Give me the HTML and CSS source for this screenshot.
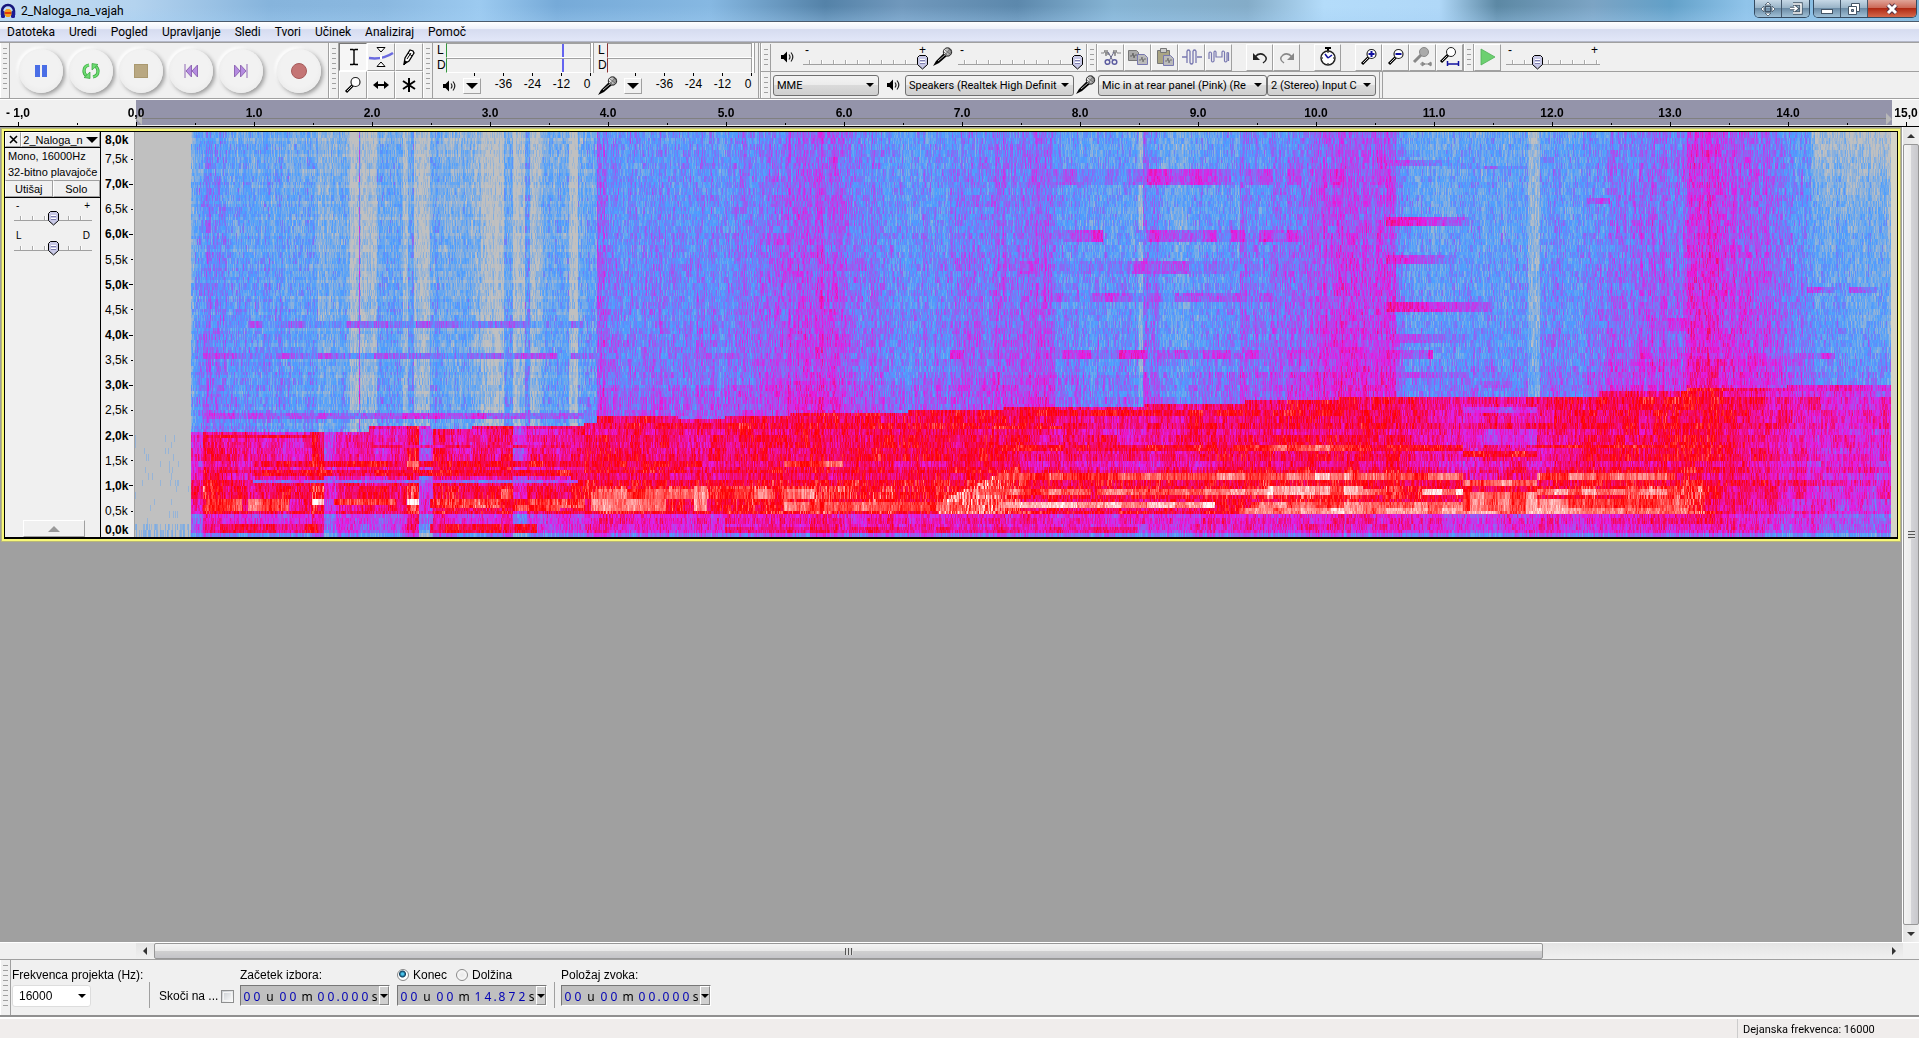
FILE: index.html
```html
<!DOCTYPE html>
<html lang="sl">
<head>
<meta charset="utf-8">
<title>2_Naloga_na_vajah</title>
<link rel="stylesheet" href="styles.css">
</head>
<body>
<svg class="defs" aria-hidden="true">
  <defs>
    <linearGradient id="mic-head"><stop offset="0" stop-color="#fff"/><stop offset="1" stop-color="#777"/></linearGradient>
    <symbol id="speaker" viewBox="0 0 14 14"><path d="M0 5h2.500L6 1.500v11L2.500 9H0z" fill="#000"/><path d="M8 4.500q2 2.500 0 5M10 2.500q3.600 4.500 0 9" fill="none" stroke="#222" stroke-width="1.200"/></symbol>
    <symbol id="mic" viewBox="0 0 20 20"><path d="M0 19l3-5 8-8 3 3-8 7-4 2z" fill="#000"/><path d="M5 14l7-6" stroke="#bbb"/><circle cx="14.500" cy="5" r="4.200" fill="url(#mic-head)" stroke="#222"/><path d="M12 3l5 4M11 5l4 4M15 1l4 4M17 2l-5 6" stroke="#555" stroke-width=".7"/></symbol>
    <symbol id="lens" viewBox="0 0 20 20"><path d="M3 17l7-7" stroke="#000" stroke-width="3"/><path d="M4 16l5-5" stroke="#ccc"/><circle cx="12.500" cy="7" r="4.500" fill="#fff" stroke="#222" stroke-width="1.200"/></symbol>
  </defs>
</svg>

<header class="titlebar">
  <svg class="app-icon" viewBox="0 0 16 16"><path d="M2 12V8a6 6 0 0 1 12 0v4" fill="none" stroke="#16167c" stroke-width="2.500"/><rect x="1" y="8" width="4" height="7" rx="1.500" fill="#1c1c96"/><rect x="11" y="8" width="4" height="7" rx="1.500" fill="#1c1c96"/><path d="M4.500 12V8l2-2h3l2 2v4l-2 2h-3z" fill="#f6a11a"/><path d="M5 10h6" stroke="#e43a0c" stroke-width="2"/></svg>
  <h1>2_Naloga_na_vajah</h1>
  <div class="caption-group">
    <button aria-label="Premakni"><svg width="16" height="16" viewBox="0 0 16 16"><path d="M8 1l3 3H5zM8 15l3-3H5zM1 8l3-3v6zM15 8l-3-3v6z" fill="#fff" stroke="#456" stroke-width=".8"/><rect x="5.500" y="5.500" width="5" height="5" fill="none" stroke="#456"/></svg></button>
    <button aria-label="Na drugi zaslon"><svg width="14" height="14" viewBox="0 0 14 14"><path d="M4 2h8v9H4M1 6.500h6M5 4l3 2.500L5 9" fill="none" stroke="#456" stroke-width="3.400"/><path d="M4 2h8v9H4M1 6.500h6M5 4l3 2.500L5 9" fill="none" stroke="#fff" stroke-width="1.600"/></svg></button>
  </div>
  <div class="caption-group">
    <button aria-label="Pomanjšaj"><svg width="14" height="14" viewBox="0 0 14 14"><rect x="1.500" y="7.500" width="11" height="4" fill="#fff" stroke="#456"/></svg></button>
    <button aria-label="Obnovi"><svg width="14" height="14" viewBox="0 0 14 14"><path d="M4.500 1.500h8v8h-8z" fill="#fff" stroke="#456"/><path d="M1.500 4.500h8v8h-8z" fill="#fff" stroke="#456"/><path d="M4.500 7.500h2v2h-2z" fill="#89a" stroke="#456"/></svg></button>
    <button class="close" aria-label="Zapri"><svg width="14" height="14" viewBox="0 0 14 14"><path d="M3 3l8 8M11 3l-8 8" stroke="#534" stroke-width="5"/><path d="M3 3l8 8M11 3l-8 8" stroke="#fff" stroke-width="3"/></svg></button>
  </div>
</header>

<nav class="menubar">
  <a href="#">Datoteka</a><a href="#">Uredi</a><a href="#">Pogled</a><a href="#">Upravljanje</a><a href="#">Sledi</a><a href="#">Tvori</a><a href="#">Učinek</a><a href="#">Analiziraj</a><a href="#">Pomoč</a>
</nav>

<div class="toolbars">
  <section class="bar transport">
    <i class="grip"></i>
    <button aria-label="Premor"><svg width="16" height="16"><path d="M2 2h5v12H2zM9 2h5v12H9z" fill="#4a6ee6"/></svg></button>
    <button aria-label="Predvajaj v zanki"><svg width="18" height="18" viewBox="0 0 18 18"><path d="M7 3q-5 1-5 6 0 3 2.500 4.800M11 15q5-1 5-6 0-3-2.500-4.800" fill="none" stroke="#35a23a" stroke-width="3.200"/><path d="M7 3q-5 1-5 6 0 3 2.500 4.800M11 15q5-1 5-6 0-3-2.500-4.800" fill="none" stroke="#6ddb72" stroke-width="1.800"/><path d="M2 15.500l6 1V10zM16 2.500l-6-1V8z" fill="#6ddb72" stroke="#35a23a" stroke-width=".7"/></svg></button>
    <button aria-label="Ustavi"><svg width="14" height="14"><rect x=".5" y=".5" width="13" height="13" fill="#b9a882" stroke="#aa9970"/></svg></button>
    <button aria-label="Na začetek"><svg width="16" height="16" viewBox="0 0 16 16"><path d="M2 1v14M8.500 2v12L3 8zM14.500 2v12L9 8z" fill="#b48be0" stroke="#9068b4"/></svg></button>
    <button aria-label="Na konec"><svg width="16" height="16" viewBox="0 0 16 16"><path d="M14 1v14M7.500 2v12L13 8zM1.500 2v12L7 8z" fill="#b48be0" stroke="#9068b4"/></svg></button>
    <button class="record" aria-label="Snemaj"><svg width="18" height="18"><circle cx="9" cy="9" r="7.500" fill="#c47575" stroke="#a65b5b"/></svg></button>
  </section>

  <section class="bar tools">
    <i class="grip"></i>
    <div class="tool-grid">
      <button class="on" aria-label="Izbor"><svg width="20" height="20"><path d="M7 2.500h3l1 1 1-1h3M11 3v14M7 17.500h3l1-1 1 1h3" fill="none" stroke="#000" stroke-width="1.400"/></svg></button>
      <button aria-label="Ovojnica"><svg width="24" height="20" viewBox="0 0 24 20"><path d="M8 .5h8L12 5zM8 19.500h8L12 15z" fill="#fff" stroke="#000"/><path d="M0 11q13 2 24-5" fill="none" stroke="#6a6ae0" stroke-width="2.500"/><path d="M12 8v4" stroke="#fff" stroke-width="2"/></svg></button>
      <button aria-label="Risanje"><svg width="20" height="20"><path d="M5 17l1-6 5-8 3 1 1 2-5 8z" fill="#fff" stroke="#000" stroke-width="1.300"/><path d="M5 18l1-4 2 1zM9 6l4 3M8 12l4-6" stroke="#000"/></svg></button>
      <button aria-label="Povečava"><svg width="20" height="20"><use href="#lens"/></svg></button>
      <button aria-label="Časovni zamik"><svg width="20" height="20"><path d="M4 10h12" stroke="#000" stroke-width="2"/><path d="M2 10l5-4v8zM18 10l-5-4v8z"/></svg></button>
      <button aria-label="Več orodij"><svg width="20" height="20"><path d="M10 3v14M4 6l12 8M16 6L4 14" stroke="#000" stroke-width="2"/></svg></button>
    </div>
  </section>

  <section class="bar meters">
    <i class="grip"></i>
    <div class="meter">
      <div class="channel"><b>L</b><span class="level"><i class="peak"></i></span></div>
      <div class="channel"><b>D</b><span class="level"><i class="peak"></i></span></div>
      <div class="meter-ticks"></div>
      <div class="meter-foot"><svg width="14" height="14"><use href="#speaker"/></svg><button class="drop" aria-label="Merilnik predvajanja"></button><span>-36</span><span>-24</span><span>-12</span><span class="zero">0</span></div>
    </div>
    <div class="meter input">
      <div class="channel"><b>L</b><span class="level"></span></div>
      <div class="channel"><b>D</b><span class="level"></span></div>
      <div class="meter-ticks"></div>
      <div class="meter-foot"><svg width="20" height="20"><use href="#mic"/></svg><button class="drop" aria-label="Merilnik snemanja"></button><span>-36</span><span>-24</span><span>-12</span><span class="zero">0</span></div>
    </div>
  </section>

  <div class="stack">
    <div class="stack-row">
      <section class="bar mixer">
        <i class="grip"></i>
        <svg class="spk" width="14" height="14"><use href="#speaker"/></svg>
        <label class="slider wide"><span><em>-</em><em>+</em></span><input type="range" value="100" aria-label="Glasnost predvajanja"></label>
        <svg width="20" height="20"><use href="#mic"/></svg>
        <label class="slider wide"><span><em>-</em><em>+</em></span><input type="range" value="100" aria-label="Glasnost snemanja"></label>
      </section>
      <section class="bar edit">
        <i class="grip"></i>
        <button aria-label="Obreži"><svg width="20" height="20"><path d="M0 6h3l1-3 1 6 1-6 1 5 1-2M12 6l1-3 1 6 1-6 1 3h4" fill="none" stroke="#888" /><path d="M7 5l5 9M13 5l-5 9" stroke="#668"/><circle cx="6.500" cy="15" r="2.300" fill="none" stroke="#5c5ca0" stroke-width="1.500"/><circle cx="13.500" cy="15" r="2.300" fill="none" stroke="#5c5ca0" stroke-width="1.500"/></svg></button>
        <button aria-label="Kopiraj"><svg width="20" height="20"><path d="M.5 3.500h8l2 2v8H.5z" fill="#aaa" stroke="#777"/><path d="M2 9h2l1-3 1 5 1-3h2" fill="none" stroke="#666"/><path d="M9.500 7.500h7l3 3v7h-10z" fill="#bbb" stroke="#7878b0"/><path d="M11 13h2l1-3 1 5 1-3h2" fill="none" stroke="#777"/></svg></button>
        <button aria-label="Prilepi"><svg width="20" height="20"><path d="M2.500 3.500h12v13h-12z" fill="#aaa584" stroke="#777"/><path d="M5.500 1.500h6v4h-6z" fill="#ccc" stroke="#777"/><path d="M8.500 8.500h7l3 3v7h-10z" fill="#bbb" stroke="#7878b0"/><path d="M10 14h2l1-3 1 5 1-3h2" fill="none" stroke="#777"/></svg></button>
        <button aria-label="Prireži"><svg width="20" height="20"><path d="M0 10h5M15 10h5M5 4v12M8 4v12M11 4v12M14 4v12M5 4q1.500-2 3 0M8 16q1.500 2 3 0M11 4q1.500-2 3 0" fill="none" stroke="#7878b0" stroke-width="1.300"/></svg></button>
        <button aria-label="Utišaj zvok"><svg width="20" height="20"><path d="M0 12V6q1-2 2.500 0v8q1 2 2.500 0V5q1-2 2 0v5h6V5q1-2 2.500 0v9q1 2 2.500 0V6q1-1 1.500 0v8" fill="none" stroke="#7878b0" stroke-width="1.200"/></svg></button>
        <button class="gap" aria-label="Razveljavi"><svg width="20" height="20"><path d="M5 10q4-5 9-2 5 4-1 8" fill="none" stroke="#222" stroke-width="1.500"/><path d="M3 6v7h7z" fill="#222"/></svg></button>
        <button aria-label="Uveljavi"><svg width="20" height="20"><path d="M15 10q-4-5-9-2-5 4 1 8" fill="none" stroke="#888" stroke-width="1.500"/><path d="M17 6v7h-7z" fill="#888"/></svg></button>
        <button class="gap" aria-label="Zakleni sledi"><svg width="20" height="20"><path d="M7 1h6M10 1v3" stroke="#000" stroke-width="2"/><circle cx="10" cy="11" r="7" fill="#fff" stroke="#222" stroke-width="1.500"/><path d="M10 11L7 7M10 11l4-3" stroke="#1010a0" stroke-width="1.500"/><path d="M10 5v1M10 16v1M4 11h1M15 11h1" stroke="#000"/></svg></button>
        <button class="gap" aria-label="Povečaj"><svg width="20" height="20"><use href="#lens"/><path d="M9.500 7h6M12.500 4v6" stroke="#1010a0" stroke-width="2"/></svg></button>
        <button aria-label="Pomanjšaj pogled"><svg width="20" height="20"><use href="#lens"/><path d="M9.500 7h6" stroke="#1010a0" stroke-width="2"/></svg></button>
        <button aria-label="Prilagodi izbor"><svg width="20" height="20"><path d="M1 15l7-7" stroke="#888" stroke-width="3"/><circle cx="11" cy="5" r="4.500" fill="#aaa" stroke="#888"/><path d="M7 17h12M12 17l-3-2v4zM15 17l3-2v4z" stroke="#888" fill="#888"/></svg></button>
        <button aria-label="Prilagodi projekt"><svg width="20" height="20"><path d="M1 15l7-7" stroke="#000" stroke-width="3"/><path d="M2 14l5-5" stroke="#ccc"/><circle cx="11" cy="5" r="4.500" fill="#fff" stroke="#222"/><path d="M7.500 14v5M18.500 14v5M7 17h12" stroke="#1010a0" stroke-width="1.500"/></svg></button>
      </section>
      <section class="bar speed">
        <i class="grip"></i>
        <button aria-label="Predvajaj s hitrostjo"><svg width="20" height="20"><path d="M3 2l14 8-14 8z" fill="#6cd070" stroke="#50b058" stroke-width=".8"/></svg></button>
        <label class="slider mid"><span><em>-</em><em>+</em></span><input type="range" value="31" aria-label="Hitrost predvajanja"></label>
      </section>
    </div>
    <div class="stack-row devices">
      <i class="grip"></i>
      <select class="host" aria-label="Gostitelj"><option>MME</option></select>
      <svg class="spk-device" width="14" height="14"><use href="#speaker"/></svg>
      <select class="device" aria-label="Izhodna naprava"><option>Speakers (Realtek High Definit</option></select>
      <svg class="micro" width="20" height="20"><use href="#mic"/></svg>
      <select class="device" aria-label="Vhodna naprava"><option>Mic in at rear panel (Pink) (Re</option></select>
      <select class="channels" aria-label="Vhodni kanali"><option>2 (Stereo) Input C</option></select>
      <i class="bar-end"></i>
    </div>
  </div>
</div>

<div class="timeline">
  <div class="selected"></div>
  <ol><li>- 1,0</li><li>0,0</li><li>1.0</li><li>2.0</li><li>3.0</li><li>4.0</li><li>5.0</li><li>6.0</li><li>7.0</li><li>8.0</li><li>9.0</li><li>10.0</li><li>11.0</li><li>12.0</li><li>13.0</li><li>14.0</li><li>15,0</li></ol>
</div>

<main class="workspace">
  <div class="track-area">
    <article class="track">
      <aside class="panel">
        <div class="panel-title"><button class="x" aria-label="Zapri sled"><svg width="9" height="9"><path d="M1 1l7 7M8 1L1 8" stroke="#000" stroke-width="1.600"/></svg></button><button class="name">2_Naloga_n<i class="arrow"></i></button></div>
        <p>Mono, 16000Hz</p>
        <p>32-bitno plavajoče</p>
        <div class="mute-solo"><button>Utišaj</button><button>Solo</button></div>
        <label class="slider small"><span><em>-</em><em>+</em></span><input type="range" aria-label="Ojačitev"></label>
        <label class="slider small"><span><em>L</em><em>D</em></span><input type="range" aria-label="Panorama"></label>
        <button class="collapse" aria-label="Strni"><svg width="12" height="6"><path d="M6 0l6 6H0z" fill="#999"/></svg></button>
      </aside>
      <ol class="freq"><li>8,0k</li><li>7,5k</li><li>7,0k</li><li>6,5k</li><li>6,0k</li><li>5,5k</li><li>5,0k</li><li>4,5k</li><li>4,0k</li><li>3,5k</li><li>3,0k</li><li>2,5k</li><li>2,0k</li><li>1,5k</li><li>1,0k</li><li>0,5k</li><li>0,0k</li></ol>
      <div class="spectrum"><canvas id="spectrogram" role="img" aria-label="Spektrogram"></canvas></div>
    </article>
  </div>
  <div class="vscroll"><button class="up" aria-label="Gor"></button><div class="thumb"><i></i></div><button class="down" aria-label="Dol"></button></div>
</main>

<div class="hscroll-row">
  <div class="hscroll"><button class="left" aria-label="Levo"></button><div class="thumb"><i></i></div><div class="rest"></div><button class="right" aria-label="Desno"></button></div>
</div>

<form class="selection">
  <i class="grip"></i>
  <div class="field rate"><label for="rate">Frekvenca projekta (Hz):</label><select id="rate"><option>16000</option></select></div>
  <i class="rule"></i>
  <label class="snap">Skoči na ...<input type="checkbox"></label>
  <div class="field"><span>Začetek izbora:</span><div class="time"><b>0</b><b>0</b><i class="u">u</i><b>0</b><b>0</b><i class="m">m</i><b>0</b><b>0</b><b class="dot">.</b><b>0</b><b>0</b><b>0</b><i class="s">s</i><button type="button" aria-label="Oblika začetka"></button></div></div>
  <div class="field"><div class="radios"><label><input type="radio" name="end" checked>Konec</label><label><input type="radio" name="end">Dolžina</label></div><div class="time"><b>0</b><b>0</b><i class="u">u</i><b>0</b><b>0</b><i class="m">m</i><b>1</b><b>4</b><b class="dot">.</b><b>8</b><b>7</b><b>2</b><i class="s">s</i><button type="button" aria-label="Oblika konca"></button></div></div>
  <i class="rule"></i>
  <div class="field"><span>Položaj zvoka:</span><div class="time"><b>0</b><b>0</b><i class="u">u</i><b>0</b><b>0</b><i class="m">m</i><b>0</b><b>0</b><b class="dot">.</b><b>0</b><b>0</b><b>0</b><i class="s">s</i><button type="button" aria-label="Oblika položaja"></button></div></div>
</form>

<footer class="status"><span>Dejanska frekvenca: 16000</span></footer>
<script src="spectrogram.js"></script>
</body>
</html>
```
FILE: styles.css
```css
* { box-sizing: border-box; }
body { margin: 0; height: 100vh; display: flex; flex-direction: column; overflow: hidden; background: #f0f0f0; color: #000; font: 12px "Liberation Sans", Arial, sans-serif; }
button, input, select { margin: 0; padding: 0; font: inherit; color: inherit; border-radius: 0; }
button { display: flex; align-items: center; justify-content: center; border: 0; background: #f0f0f0; }
svg { flex: none; overflow: visible; }
p, h1, ol { margin: 0; padding: 0; list-style: none; }
i, em { font-style: normal; }
.defs { position: absolute; width: 0; height: 0; }

.titlebar { flex: none; height: 22px; display: flex; align-items: flex-start; gap: 3px; padding-right: 2px; border-bottom: 1px solid #4a5a6c;
  background: linear-gradient(#fff0 30%, #a4d0f455 100%), linear-gradient(90deg, #c4dcf2 0, #b4d3ef 7%, #86b4dc 14%, #8ab8e0 20%, #9ccaf0 25%, #76aad8 29%, #86b8e2 37%, #5482a8 43%, #7098bc 47%, #5c88ac 53%, #86b4d4 58%, #84acc8 65%, #b4dcfa 69%, #b0d8f8 75%, #5c88a4 78%, #7ca4c4 83%, #62a0c8 87%, #90c4ea 91%, #7cb4d8 100%); }
.app-icon { width: 16px; height: 16px; margin: 3px 0 0 0; }
.titlebar h1 { flex: 1; font: 12px/22px Roboto, sans-serif; padding-left: 2px; }
.caption-group { display: flex; height: 18px; border: 1px solid #344a60; border-top: 0; border-radius: 0 0 5px 5px; overflow: hidden; }
.caption-group button { width: 27px; height: 17px; border-right: 1px solid #44586c; background: linear-gradient(#c6d8e6, #9ab4c8 45%, #6c8ca6 50%, #a0c0d6); }
.caption-group button:last-child { border-right: 0; }
.caption-group .close { width: 48px; background: linear-gradient(#e0a498, #cc6a58 45%, #b02a14 50%, #d4684a); }

.menubar { flex: none; height: 20px; display: flex; gap: 14px; padding-left: 7px; border-bottom: 1px solid #b4b8c8; background: linear-gradient(#fff, #eef1fa 35%, #d6dcf0 40%, #e2e7f8); font: 12px/21px Roboto, sans-serif; }
.menubar a { color: #000; text-decoration: none; }

.toolbars { flex: none; height: 57px; display: flex; border-top: 1px solid #a0a0a0; border-bottom: 1px solid #a0a0a0; }
.bar { display: flex; align-items: center; border-right: 1px solid #a0a0a0; }
.grip { flex: none; align-self: stretch; width: 10px; border-right: 1px solid #a0a0a0; border-left: 1px solid #fff; background: repeating-linear-gradient(#a0a0a0 0 1px, #f0f0f0 1px 2px, #f0f0f0 2px 5px) content-box; padding: 5px 2px; }

.transport { width: 329px; }
.transport button { width: 44px; height: 44px; margin-left: 6px; border-radius: 50%; background: radial-gradient(circle at 50% 45%, #f2f2f2 55%, #e4e4e4 100%); box-shadow: 2px 2px 4px #999, -2px -2px 3px #fff; }
.transport .grip + button { margin-left: 9px; }
.transport .record { margin-left: 14px; }

.tools { width: 94px; }
.tool-grid { display: grid; grid-template: 28px 28px / 28px 28px 28px; align-self: stretch; }
.tool-grid button, .edit button, .speed button { border: 1px solid; border-color: #fff #a0a0a0 #a0a0a0 #fff; }
.tool-grid .on { border-color: #777 #fff #fff #777; background: #f6f6f6; }

.meters { width: 338px; align-items: stretch; border-right: 3px double #a0a0a0; }
.meter { width: 161px; padding-left: 4px; }
.channel { display: flex; height: 15px; line-height: 15px; }
.channel b { width: 9px; font-weight: normal; }
.level { width: 145px; border: 1px solid; border-color: #a0a0a0 #a0a0a0 #fff #32963c; box-shadow: 2px 0 #fff, 3px 0 #a0a0a0; }
.input .level { border-left-color: #8c3232; }
.peak { display: block; width: 2px; height: 13px; margin-left: 115px; background: #6464f0; }
.meter-ticks { height: 3px; margin-left: 37px; width: 119px; background: repeating-linear-gradient(90deg, #000 0 1px, #0000 1px 29px); }
.meter-foot { display: flex; align-items: center; height: 20px; padding-left: 6px; }
.input .meter-foot { padding-left: 0; }
.meter-foot svg { margin-right: 6px; }
.meter-foot span { flex: none; width: 29px; text-align: center; line-height: 16px; align-self: flex-start; }
.meter-foot .drop { flex: none; width: 18px; height: 16px; margin-right: 8px; border: 1px solid; border-color: #fff #a0a0a0 #a0a0a0 #fff; }
.meter-foot .zero { width: 22px; }
.drop::after, .arrow { content: ""; border: 6px solid #0000; border-top-color: #000; border-bottom: 0; }

.stack { flex: 1; min-width: 0; display: flex; flex-direction: column; }
.stack-row { display: flex; align-items: center; height: 28px; }
.stack-row + .stack-row { height: 27px; border-top: 1px solid #a0a0a0; }
.stack-row .bar { height: 27px; }
.mixer { width: 326px; }
.spk { margin: 0 2px 0 10px; }
.spk-device { margin: 0 4px 0 8px; }
.slider { display: flex; flex-direction: column; flex: none; height: 26px; line-height: 12px; }
.slider span { display: flex; justify-content: space-between; height: 10px; padding: 0 2px; }
.slider input { appearance: none; width: 100%; height: 16px; outline: 0; background: linear-gradient(#a0a0a0, #a0a0a0) 0 10px / 100% 1px no-repeat, repeating-linear-gradient(90deg, #aaa 0 1px, #fff 1px 2px, #0000 2px 12px) 6px 6px / 100% 4px no-repeat; }
.slider input::-webkit-slider-thumb { appearance: none; width: 11px; height: 15px; background: url("data:image/svg+xml,%3Csvg xmlns='http://www.w3.org/2000/svg' width='11' height='15'%3E%3Cpath d='M2.500 .5h6l2 2v7l-5 4.500-5-4.500v-7z' fill='%23c8c8e6' stroke='%23000'/%3E%3Cpath d='M3 4.500h5M3 7.500h5' stroke='%23fff'/%3E%3Cpath d='M3 5.500h5M3 8.500h5' stroke='%238080b0'/%3E%3C/svg%3E"); }
.wide { width: 125px; margin: 0 5px 0 6px; }
.mixer .slider:last-child { margin: 0 0 0 5px; }
.mid { width: 94px; margin-left: 5px; }
.small { width: 78px; margin: 2px auto 0 9px; height: 28px; }
.small span { font-size: 10px; line-height: 11px; }
.edit { width: 377px; }
.edit button, .speed button { width: 27px; height: 27px; }
.edit .gap { margin-left: 14px; }
.speed { border-right: 0; }

select { appearance: none; height: 21px; padding: 0 16px 0 3px; border: 1px solid #707070; border-radius: 3px; outline: 0; font: 11px Roboto, sans-serif; overflow: hidden; text-overflow: clip; background: url("data:image/svg+xml,%3Csvg xmlns='http://www.w3.org/2000/svg' width='8' height='4'%3E%3Cpath d='M0 0h8L4 4z'/%3E%3C/svg%3E") right 4px center no-repeat, linear-gradient(#f4f4f4, #ebebeb 50%, #dadada 50%, #cfcfcf); }
.devices select:first-of-type { margin-left: 2px; }
.host { width: 106px; }
.device { width: 169px; }
.channels { width: 109px; }
.micro { margin: 0 2px; }
.bar-end { align-self: stretch; width: 4px; margin-left: 3px; border: solid #a0a0a0; border-width: 0 1px; }

.timeline { flex: none; position: relative; height: 28px; border-top: 1px solid #fff; border-bottom: 1px solid #000; overflow: hidden; }
.selected { position: absolute; inset: 0 27px 1px 136px; background: linear-gradient(#808080, #808080) 0 18px / 100% 1px no-repeat, #9494aa; }
.selected::before, .selected::after { content: ""; position: absolute; top: 13px; border: 6px solid #0000; }
.selected::before { left: -6px; border-right-color: #b8b8b8; }
.selected::after { right: -6px; border-left-color: #b8b8b8; }
.timeline ol { position: relative; display: flex; margin-left: -41px; font-weight: bold; line-height: 27px; }
.timeline li { flex: none; width: 118px; height: 26px; text-align: center; background: linear-gradient(#000, #000) 59px 22px / 1px 4px no-repeat, linear-gradient(#000, #000) 0 23px / 1px 2px no-repeat; }

.workspace { flex: 1; min-height: 0; display: flex; background: #a0a0a0; }
.track-area { flex: 1; min-width: 0; padding: 2px 2px 0; }
.track { display: flex; height: 412px; border: 2px solid #f8f878; outline: 1px solid #b8b878; }
.panel { flex: none; width: 97px; display: flex; flex-direction: column; border: solid #000; border-width: 1px 1px 2px; background: #f0f0f0; font-size: 11px; }
.panel-title { display: flex; height: 16px; border-bottom: 1px solid #000; }
.panel button { border: 1px solid; border-color: #fff #a0a0a0 #a0a0a0 #fff; }
.panel-title .x { width: 16px; }
.panel-title .name { flex: 1; gap: 3px; }
.panel p { height: 16px; line-height: 16px; padding-left: 3px; white-space: nowrap; }
.mute-solo { display: grid; grid-template-columns: 1fr 1fr; height: 18px; border-bottom: 1px solid #000; }
.mute-solo button { border-top-color: #a0a0a0; }
.collapse { width: 62px; height: 17px; margin: auto 0 0 18px; }
.freq { flex: none; width: 34px; display: flex; flex-direction: column; border: solid #000; border-width: 1px 0 2px; background: #f0f0f0; box-shadow: inset -1px 0 #a0a0a0; }
.freq li { flex: 1; display: flex; align-items: center; justify-content: space-between; padding: 0 2px 1px 4px; line-height: 12px; }
.freq li:nth-child(odd) { font-weight: bold; }
.freq li::after { content: ""; width: 2px; height: 1px; background: #000; }
.freq li:nth-child(odd)::after { width: 4px; }
.freq li:first-child, .freq li:last-child { flex: 0 0 13px; }
.freq li:first-child::after, .freq li:last-child::after { display: none; }
.freq li:first-child { padding-top: 2px; }
.spectrum { flex: 1; min-width: 0; border: solid #000; border-width: 1px 1px 2px 0; background: #d4d4c8; padding-right: 6px; }
.spectrum canvas { display: block; width: 100%; height: 100%; }

.vscroll { flex: none; width: 17px; display: flex; flex-direction: column; border-left: 1px solid #fff; background: linear-gradient(90deg, #e4e4e4, #f0f0f0); }
.vscroll button { flex: none; height: 17px; background: none; }
.vscroll .thumb { flex: 1; display: flex; align-items: center; justify-content: center; border: 1px solid #979797; border-radius: 2px; background: linear-gradient(90deg, #f4f4f4, #ececec 50%, #d4d4d8 50%, #c8c8cc); }
.vscroll .thumb i { width: 7px; height: 8px; background: repeating-linear-gradient(#555 0 1px, #ddd 1px 3px); }
.up::after, .down::after, .left::after, .right::after { content: ""; border: 4px solid #0000; }
.up::after { border-bottom-color: #333; border-top: 0; }
.down::after { border-top-color: #333; border-bottom: 0; }
.left::after { border-right-color: #333; border-left: 0; }
.right::after { border-left-color: #333; border-right: 0; }
.hscroll-row { flex: none; height: 17px; padding: 0 16px 0 136px; border-top: 1px solid #fff; }
.hscroll { display: flex; height: 16px; background: linear-gradient(#e4e4e4, #f0f0f0); }
.hscroll button { width: 18px; background: none; }
.hscroll .thumb { flex: 1389; display: flex; align-items: center; justify-content: center; border: 1px solid #979797; border-radius: 2px; background: linear-gradient(#f4f4f4, #e8e8e8 50%, #d0d0d0 50%, #c4c4c8); }
.hscroll .thumb i { width: 8px; height: 7px; background: repeating-linear-gradient(90deg, #555 0 1px, #ddd 1px 3px); }
.hscroll .rest { flex: 342; }

.selection { flex: none; height: 58px; display: flex; border-top: 1px solid #a0a0a0; border-bottom: 2px solid #909090; }
.selection .grip { width: 11px; }
.field { display: flex; flex-direction: column; gap: 1px; padding-top: 6px; margin-right: 7px; line-height: 18px; }
.rate { width: 137px; margin: 0 0 0 1px; }
.rate select { width: 79px; height: 22px; border-color: #ddd; padding-left: 6px; font: 12px "Liberation Sans", Arial, sans-serif; background: url("data:image/svg+xml,%3Csvg xmlns='http://www.w3.org/2000/svg' width='8' height='4'%3E%3Cpath d='M0 0h8L4 4z'/%3E%3C/svg%3E") right 4px center no-repeat, #fff; }
.rule { flex: none; width: 1px; height: 26px; margin: 22px 9px 0 0; background: #a0a0a0; }
.selection .rule:nth-of-type(3) { margin-right: 6px; }
.snap { display: flex; align-items: center; justify-content: space-between; width: 75px; height: 22px; margin: 25px 6px 0 0; white-space: nowrap; }
.snap input { appearance: none; width: 13px; height: 13px; border: 1px solid #8e8f8f; background: linear-gradient(135deg, #c8ccd0, #fff); outline: 1px solid #f4f4f4; outline-offset: -3px; }
.radios { display: flex; gap: 9px; }
.radios label { display: flex; align-items: center; gap: 4px; height: 18px; }
.radios input { appearance: none; width: 12px; height: 12px; border: 1px solid #888; border-radius: 50%; background: radial-gradient(#e8e8e8, #fff); }
.radios input:checked { background: radial-gradient(circle at 45% 40%, #4cc8f0 0 1px, #0c3c5c 3px, #fff 4px); }
.time { display: flex; width: 150px; height: 21px; padding-left: 1px; border: 1px solid; border-color: #777 #fff #fff #777; background: #c0c0c0; font: 12px/21px "Noto Sans", sans-serif; text-align: center; }
.time b { width: 10px; font-weight: normal; color: #0000b4; }
.time .dot { width: 4px; }
.time .u { width: 16px; }
.time .m { width: 18px; }
.time .s { width: 9px; }
.time button { width: 10px; height: 19px; border: 1px solid; border-color: #fff #888 #888 #fff; background: #d0d0d0; }
.time button::after { content: ""; border: 4px solid #0000; border-top-color: #000; border-bottom: 0; }

.status { flex: none; height: 21px; display: flex; justify-content: flex-end; border-top: 2px solid #fff; background: #f0edec; font: 11px/21px Roboto, sans-serif; }
.status span { width: 182px; padding-left: 5px; border-left: 1px solid #ccc; }
```
FILE: spectrogram.js
```js
// Draws the spectrogram: time runs across (118 px per second), frequency up (0-8 kHz).
const PX_PER_SECOND = 118;
const BINS = 128;
const PALETTE = [[192, 192, 192], [75, 158, 255], [228, 28, 226], [255, 0, 0], [255, 255, 255]];

// Background energy above the speech band: [start s, energy].
const HIGH = [
  [0, 0], [.47, .18], [.53, .25], [.6, .35], [.69, .29], [.85, .25], [1.45, .22], [1.55, .11], [1.7, .18], [1.82, .05],
  [1.89, .38], [1.9, .06], [2.05, .2], [2.27, .05], [2.31, .25], [2.36, .06], [2.5, .22], [2.75, .16],
  [2.93, .04], [3.12, .24], [3.2, .06], [3.3, .28], [3.34, .1], [3.45, .2], [3.67, .04], [3.75, .22],
  [3.91, .4], [4.02, .31], [4.2, .28], [4.6, .29], [5.1, .31], [5.4, .34], [5.6, .4], [5.85, .41], [6, .37], [6.3, .3],
  [6.45, .27], [6.85, .31], [7.2, .34], [7.7, .38], [7.85, .31], [8.1, .25], [8.5, .14], [8.54, .36],
  [8.58, .3], [8.7, .26], [8.92, .19], [8.97, .25], [9.36, .36], [9.5, .3], [9.78, .36], [9.9, .35], [10.2, .44], [10.5, .42],
  [10.68, .32], [10.85, .23], [11.3, .25], [11.8, .12], [11.9, .26], [12.3, .28], [12.5, .33],
  [12.8, .37], [13.15, .48], [13.4, .48], [13.6, .41], [13.9, .35], [14.1, .29], [14.25, .22], [14.87, .18]
];

// Upper edge of the speech band: [start s, kHz].
const EDGE = [
  [.47, 2.05], [1.98, 2.17], [2.5, 2.13], [2.85, 2.2], [3.8, 2.25], [3.91, 2.34], [4.6, 2.32], [5, 2.38],
  [5.55, 2.44], [6.55, 2.5], [7.35, 2.56], [8.55, 2.62], [9.4, 2.66], [10.2, 2.74], [12.1, 2.76],
  [12.4, 2.85], [12.9, 2.88], [13.15, 2.93], [14, 3]
];

// Mean energy inside the speech band: [start s, energy].
const LOW = [
  [.47, .52], [.57, .67], [.8, .6], [1.0, .55], [1.5, .67], [1.6, .43], [1.7, .55], [2.3, .67], [2.4, .39],
  [2.52, .62], [3, .57], [3.1, .67], [3.2, .42], [3.32, .55], [3.7, .58], [3.91, .66], [4.6, .62], [5.5, .67],
  [6.2, .66], [7.2, .66], [7.8, .62], [8.5, .59], [9.4, .64], [10.2, .67], [10.7, .62], [11.25, .56],
  [11.9, .6], [12.6, .65], [13.15, .7], [13.5, .67], [13.8, .6], [14.2, .53], [14.6, .49]
];

// Tonal lines and patches: [from s, to s, from kHz, to kHz, energy].
const LINES = [
  [.57, 3.8, 4.1, 4.28, .29], [.57, 6, 3.48, 3.65, .34], [.57, 3.8, 2.3, 2.4, .4],
  [.57, 1.5, 1.9, 2, .7], [2, 3.75, 1.72, 1.82, .62], [1, 4.8, 1.36, 1.5, .71], [1, 3.75, 1.14, 1.28, .7],
  [1, 3.75, 1.07, 1.13, .38], [1.5, 1.6, .6, .75, .93], [1.5, 1.6, 1.35, 1.5, .8], [2.3, 2.4, 1.35, 1.5, .9], [2.3, 2.4, .6, .75, .96],
  [3.1, 3.2, .68, .94, .87], [.6, .9, .5, .75, .84], [.95, 1.3, .5, .75, .82], [1.68, 2.2, .6, .75, .82],
  [2.5, 3.8, .55, .72, .79], [3.2, 3.6, .5, .6, .82], [3.86, 4.5, .5, .7, .85], [3.9, 4.85, .72, .92, .83], [4.73, 4.84, .5, .95, .92],
  [4.95, 5.4, .75, .9, .83], [5.5, 5.75, .7, .9, .85], [5.5, 6, 1.35, 1.5, .81], [5.5, 7, .5, .65, .82],
  [7.32, 9.15, .54, .68, .92], [7.1, 8.1, .8, .92, .85], [8.15, 10.6, .8, .92, .85], [7.3, 11.25, 1.1, 1.22, .82],
  [7.3, 11.25, 1.7, 1.82, .72], [9.3, 10.35, 1.7, 1.82, .81], [9.45, 11.25, .52, .68, .86], [9.35, 13.15, .38, .52, .89],
  [9.6, 10.3, 1.08, 1.2, .88], [9.6, 10.4, .8, .95, .88], [10.9, 11.25, .8, .92, .92],
  [11.25, 11.88, .5, .85, .84], [11.25, 11.88, .98, 1.12, .84], [11.25, 11.88, 1.55, 1.65, .74],
  [11.25, 11.88, 1.82, 2.1, .48], [11.25, 11.88, 2.43, 2.53, .42],
  [11.88, 13.05, 1.08, 1.22, .84], [11.88, 13.12, .8, .92, .86], [11.88, 13.12, .52, .75, .84],
  [11.88, 13.5, 1.72, 1.82, .74], [7.3, 10.5, 2.35, 2.48, .71], [7, 7.85, 2.1, 2.2, .76],
  [6.9, 11, 3.48, 3.68, .42], [7.7, 10.2, 4.62, 4.8, .34], [7.5, 10.2, 5.2, 5.45, .33],
  [7.7, 8.2, 5.8, 6.05, .38], [8.5, 10.2, 5.8, 6.05, .37], [7.6, 10.6, 6.95, 7.25, .38],
  [10.6, 11.2, 7.32, 7.45, .46], [10.6, 11.3, 6.16, 6.35, .57], [10.6, 11.2, 5.4, 5.56, .52],
  [10.6, 11.5, 4.42, 4.6, .58], [10.6, 11.6, 3.84, 4, .45], [10.6, 11.88, 3.1, 3.22, .44],
  [11.3, 11.8, 7.25, 7.35, .32], [11.3, 11.8, 2.95, 3.05, .35],
  [12.85, 13.4, 4.08, 4.3, .46], [12.7, 14.4, 3.52, 3.65, .4], [13.8, 14.8, 4.85, 4.95, .31],
  [12.3, 12.5, 6.6, 6.7, .36], [2.5, 3.4, .05, .2, .69], [.6, 1.6, .05, .2, .65], [5, 8.5, .04, .14, .6]
];

function noise(a, b) {
  let h = Math.imul(a + 71, 374761393) ^ Math.imul(b + 13, 668265263);
  h = Math.imul(h ^ (h >>> 13), 1274126177);
  return ((h ^ (h >>> 16)) >>> 0) / 4294967296;
}

function stepAt(table, t) {
  let value = table[0][1];
  for (const [start, v] of table) {
    if (t < start) break;
    value = v;
  }
  return value;
}

// Like stepAt, but eases between neighbours that are close in level.
function easeAt(table, t) {
  let i = 0;
  while (i + 1 < table.length && t >= table[i + 1][0]) i++;
  if (i + 1 === table.length) return table[i][1];
  const [t0, v0] = table[i];
  const [t1, v1] = table[i + 1];
  if (Math.abs(v1 - v0) > .095) return v0;
  return v0 + (v1 - v0) * (t - t0) / (t1 - t0);
}

function energy(t, f, x, bin) {
  const r = noise(x, bin >> 1) * .55 + noise(x, bin + 500) * .25 + noise(x >> 1, (bin >> 2) + 900) * .2 - .5;
  if (t < .47) {
    const n = noise(x, bin >> 1);
    if (f < .2) return n > .5 ? .16 * n : 0;
    return f < 2 && n > .95 ? .09 : 0;
  }
  const block = noise(Math.floor(t * 8.4), bin >> 2) - .5;
  const row = noise(7, bin >> 1) - .5;
  const edge = stepAt(EDGE, t);
  let v;
  if (f > edge) {
    v = easeAt(HIGH, t) + (5 - f) * .015 + block * .04 + row * .02;
    v += (noise(x >> 2, 9) - .5) * .06 + (noise(x, 77) - .5) * .05;
    if (t > 14.2) v -= Math.max(0, f - 6) * .06;
    if (t < 3.9 && bin % 5 === 0) v -= .04;
    if (f < edge + .6 && t > 3.9) v += .04;
    v += r * .32;
  } else {
    v = easeAt(LOW, t) + block * .11 + row * .09;
    v += (noise(x >> 2, 19) - .5) * .05;
    if (f < .42) v -= .11;
    else if (f < 1 && t < 13.3) v += .1;
    else if (f < 1.3 && t < 13.3) v += .04;
    if (f < .06) v -= .14;
    v += r * .3;
  }
  // Rising onset of the louder tone just before 7.5 s.
  const ramp = .5 + (t - 6.8) * 1.1;
  if (t > 6.8 && t < 7.5 && f > .42 && f < ramp + .15) {
    v = Math.max(v, .86 + r * .35 - Math.max(0, t - 7.25) * .4);
  }
  for (const [t0, t1, f0, f1, level] of LINES) {
    if (t < t0 || t >= t1 || f < f0 || f >= f1) continue;
    const key = Math.round(f0 * 40);
    const held = t0 === 10.6 && f0 > 3;
    const spread = f0 > 3 && !held ? .2 : .12;
    let piece = (noise(Math.floor(t * 8.4), key) - .5) * spread + (noise(Math.floor(t * 25), key) - .5) * .05;
    if (held) piece = -(t - t0) / (t1 - t0) * .22;
    const line = level + piece + r * (level > .8 ? .14 : .24);
    v = f0 > 3 ? Math.max(v, line) : line;
  }
  return Math.min(.999, Math.max(0, v));
}

function draw() {
  const canvas = document.getElementById("spectrogram");
  const width = canvas.width = canvas.clientWidth;
  const height = canvas.height = canvas.clientHeight;
  const context = canvas.getContext("2d");
  const image = context.createImageData(width, height);
  for (let x = 0; x < width; x++) {
    const t = x / PX_PER_SECOND;
    for (let y = 0; y < height; y++) {
      const bin = Math.floor((height - 1 - y) / height * BINS);
      const p = energy(t, bin / (BINS - 1) * 8, x, bin) * 4;
      const k = Math.floor(p);
      const at = (y * width + x) * 4;
      for (let c = 0; c < 3; c++) {
        image.data[at + c] = PALETTE[k][c] + (PALETTE[k + 1][c] - PALETTE[k][c]) * (p - k);
      }
      image.data[at + 3] = 255;
    }
  }
  context.putImageData(image, 0, 0);
}

draw();
window.addEventListener("resize", draw);
```
